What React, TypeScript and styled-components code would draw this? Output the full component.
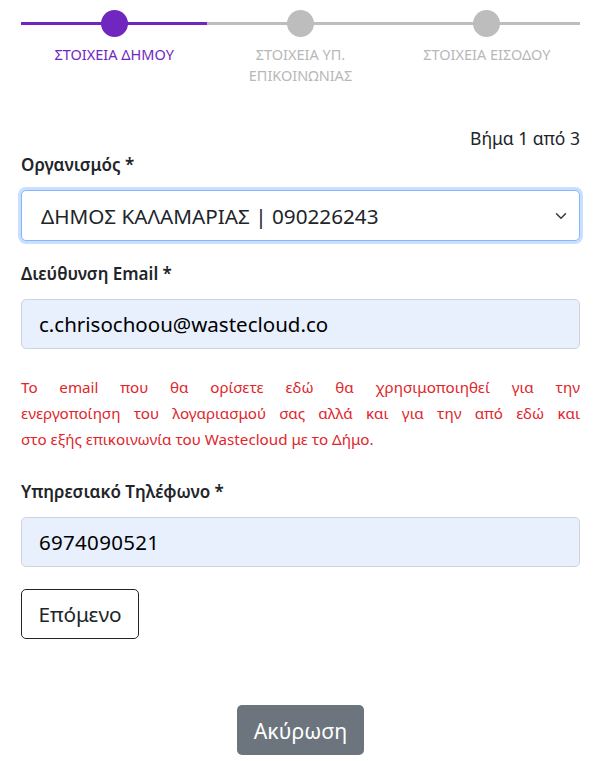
import styled, { createGlobalStyle } from "styled-components";

const GlobalStyle = createGlobalStyle`
  * { box-sizing: border-box; }
  body {
    margin: 0;
    background: #fff;
    font-family: "Noto Sans", "Open Sans", sans-serif;
    color: #212529;
  }
`;

const steps = ["ΣΤΟΙΧΕΙΑ ΔΗΜΟΥ", "ΣΤΟΙΧΕΙΑ ΥΠ. ΕΠΙΚΟΙΝΩΝΙΑΣ", "ΣΤΟΙΧΕΙΑ ΕΙΣΟΔΟΥ"];

// the notice wraps the same way as on the live page
const noticeLines = [
  "Το email που θα ορίσετε εδώ θα χρησιμοποιηθεί για την",
  "ενεργοποίηση του λογαριασμού σας αλλά και για την από εδώ και",
  "στο εξής επικοινωνία του Wastecloud με το Δήμο.",
];

const App = () => {
  const current = 0;
  return (
    <>
      <GlobalStyle />
      <Wrapper>
        <Stepper>
          {steps.map((label, i) => (
            <Step key={label}>
              <Track $active={i <= current}>
                <Dot $active={i <= current} />
              </Track>
              <StepLabel $active={i <= current}>{label}</StepLabel>
            </Step>
          ))}
        </Stepper>

        <StepCount>Βήμα 1 από 3</StepCount>

        <Field>
          <Label>Οργανισμός *</Label>
          <SelectBox>
            <span>ΔΗΜΟΣ ΚΑΛΑΜΑΡΙΑΣ | 090226243</span>
            <svg width="12" height="12" viewBox="0 0 16 16">
              <path
                d="M2 5l6 6 6-6"
                fill="none"
                stroke="#343a40"
                strokeWidth="2"
                strokeLinecap="round"
                strokeLinejoin="round"
              />
            </svg>
          </SelectBox>
        </Field>

        <Field>
          <Label>Διεύθυνση Email *</Label>
          <Input readOnly value="c.chrisochoou@wastecloud.co" />
        </Field>

        <Notice>
          {noticeLines.map((line, i) => (
            <NoticeLine key={i} $last={i === noticeLines.length - 1}>
              {line}
            </NoticeLine>
          ))}
        </Notice>

        <Field>
          <Label>Υπηρεσιακό Τηλέφωνο *</Label>
          <Input readOnly value="6974090521" $tracking="0.3px" />
        </Field>

        <NextButton type="button">Επόμενο</NextButton>

        <Footer>
          <CancelButton type="button">Ακύρωση</CancelButton>
        </Footer>
      </Wrapper>
    </>
  );
};

export default App;

const Wrapper = styled.main`
  padding: 10px 19px 8px 21px;
  display: flex;
  flex-direction: column;
`;

const Stepper = styled.div`
  display: grid;
  grid-template-columns: repeat(3, 1fr);
`;

const Step = styled.div`
  display: flex;
  flex-direction: column;
  align-items: center;
`;

const Track = styled.div<{ $active: boolean }>`
  position: relative;
  width: 100%;
  height: 26px;
  display: flex;
  justify-content: center;
  align-items: center;
  &::before {
    content: "";
    position: absolute;
    left: 0;
    right: 0;
    top: 11.5px;
    height: 3.5px;
    background: ${({ $active }) => ($active ? "#7027bf" : "#bdbdbd")};
  }
`;

const Dot = styled.span<{ $active: boolean }>`
  position: relative;
  width: 27px;
  height: 27px;
  border-radius: 50%;
  background: ${({ $active }) => ($active ? "#7027bf" : "#bdbdbd")};
`;

const StepLabel = styled.div<{ $active: boolean }>`
  margin-top: 8px;
  width: 140px;
  text-align: center;
  font-size: 14.5px;
  line-height: 21px;
  color: ${({ $active }) => ($active ? "#7027bf" : "#b8b8b8")};
`;

const StepCount = styled.div`
  margin-top: 40px;
  text-align: right;
  font-size: 17.5px;
  line-height: 24px;
`;

const Field = styled.div`
  display: flex;
  flex-direction: column;
  gap: 13px;
  margin-top: 3px;
  & + & {
    margin-top: 21px;
  }
`;

const Label = styled.label`
  font-size: 17px;
  font-weight: 600;
  line-height: 24px;
  color: #212529;
`;

const SelectBox = styled.div`
  display: flex;
  align-items: center;
  justify-content: space-between;
  height: 51px;
  padding: 0 12px 0 19px;
  font-size: 20.7px;
  color: #212529;
  border: 1px solid #86b7fe;
  border-radius: 5px;
  box-shadow: 0 0 0 3px rgba(13, 110, 253, 0.22);
  background: #fff;
`;

const Input = styled.input<{ $tracking?: string }>`
  height: 50px;
  padding: 0 17px;
  font-family: inherit;
  font-size: 20.5px;
  letter-spacing: ${({ $tracking }) => $tracking ?? "0"};
  color: #000;
  background: #e8f0fe;
  border: 1px solid #ced4da;
  border-radius: 5px;
  outline: none;
`;

const Notice = styled.p`
  margin: 25px 0 25px;
  font-size: 15.2px;
  line-height: 26px;
  color: #e0262b;
`;

const NoticeLine = styled.span<{ $last: boolean }>`
  display: block;
  text-align: ${({ $last }) => ($last ? "left" : "justify")};
  text-align-last: ${({ $last }) => ($last ? "left" : "justify")};
`;

const NextButton = styled.button`
  margin-top: 22px;
  align-self: flex-start;
  height: 50px;
  padding: 0 16.5px;
  font-family: inherit;
  font-size: 20.8px;
  color: #212529;
  background: #fff;
  border: 1px solid #212529;
  border-radius: 5px;
`;

const Footer = styled.div`
  margin-top: 66px;
  display: flex;
  justify-content: center;
`;

const CancelButton = styled.button`
  height: 50px;
  padding: 0 17px;
  font-family: inherit;
  font-size: 21.3px;
  color: #fff;
  background: #6c757d;
  border: none;
  border-radius: 5px;
`;
